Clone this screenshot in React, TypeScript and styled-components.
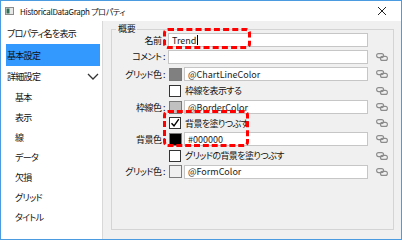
import React from "react";
import styled, { createGlobalStyle } from "styled-components";

const GlobalStyle = createGlobalStyle`
  html, body { margin: 0; padding: 0; background: #ffffff; }
  * { box-sizing: border-box; }
  body {
    font-family: "Noto Sans CJK JP", "Noto Sans", sans-serif;
    font-feature-settings: "palt";
    color: #000;
  }
`;

const Window = styled.div`
  width: 402px;
  height: 240px;
  border: 1px solid #4a9be0;
  display: flex;
  flex-direction: column;
  background: #f0f0f0;
  position: relative;
`;

const TitleBar = styled.div`
  height: 20px;
  background: #ffffff;
  display: flex;
  align-items: center;
  padding: 0 0 0 4px;
  flex: none;
`;

const TitleText = styled.span`
  font-size: 8px;
  margin-left: 6px;
  color: #111;
  letter-spacing: -0.3px;
`;

const CloseBox = styled.div`
  margin-left: auto;
  width: 30px;
  height: 20px;
  display: flex;
  align-items: center;
  justify-content: center;
  margin-right: 4px;
`;

const Body = styled.div`
  flex: 1;
  display: flex;
  min-height: 0;
`;

const Sidebar = styled.div`
  width: 102px;
  background: #ffffff;
  border-right: 1px solid #d8d8d8;
  padding: 1px 2px 0 5px;
  display: flex;
  flex-direction: column;
`;

const NavItem = styled.div<{ $h: number; $indent?: boolean; $active?: boolean }>`
  height: ${(p) => p.$h}px;
  display: flex;
  align-items: center;
  padding-left: ${(p) => (p.$indent ? 9 : 1)}px;
  font-size: 9px;
  letter-spacing: -0.7px;
  background: ${(p) => (p.$active ? "#3399ff" : "transparent")};
  color: #111;
`;

const Chevron = styled.svg`
  margin-left: auto;
  margin-right: 1px;
`;

const Main = styled.div`
  flex: 1;
  padding: 2px 7px 9px 8px;
  position: relative;
  display: flex;
`;

const Group = styled.fieldset`
  flex: 1;
  margin: 0;
  min-width: 0;
  border: 1px solid #d4d4d4;
  padding: 0 0 0 1px;
`;

const Legend = styled.legend`
  font-size: 9px;
  letter-spacing: -0.3px;
  padding: 0 2px;
  margin-left: 3px;
  line-height: 12px;
  color: #111;
`;

const FieldGrid = styled.div`
  display: grid;
  grid-template-columns: 53px 1fr 23px;
  column-gap: 2px;
  margin-top: -3px;
`;

const Label = styled.div<{ $h: number }>`
  height: ${(p) => p.$h}px;
  display: flex;
  align-items: center;
  justify-content: flex-end;
  font-size: 9px;
  letter-spacing: -0.5px;
  padding-right: 1px;
  white-space: pre;
  color: #111;
`;

const Cell = styled.div<{ $h: number }>`
  height: ${(p) => p.$h}px;
  display: flex;
  align-items: center;
  gap: 2px;
  min-width: 0;
`;

const LinkCell = styled.div<{ $h: number }>`
  height: ${(p) => p.$h}px;
  display: flex;
  align-items: center;
  justify-content: center;
  padding-left: 1px;
`;

const TextBox = styled.div`
  flex: 1;
  height: 14px;
  background: #ffffff;
  border: 1px solid #c6c6c6;
  font-family: "Noto Sans CJK JP", "Noto Sans", sans-serif;
  font-size: 9px;
  display: flex;
  align-items: center;
  padding-left: 3px;
  color: #222;
  white-space: nowrap;
  overflow: hidden;
`;

const Caret = styled.span`
  display: inline-block;
  width: 1px;
  height: 10px;
  background: #000;
  margin-left: 1px;
`;

const Swatch = styled.div<{ $color: string }>`
  width: 13px;
  height: 13px;
  flex: none;
  margin-left: 1px;
  background: ${(p) => p.$color};
  border: 1px solid #7a7a7a;
`;

const CheckRow = styled.div`
  display: flex;
  align-items: center;
  gap: 4px;
  margin-left: 1px;
  font-size: 9px;
  letter-spacing: -0.6px;
  color: #111;
`;

const CheckBox = styled.div`
  width: 12px;
  height: 12px;
  border: 1px solid #333;
  background: #fff;
  display: flex;
  align-items: center;
  justify-content: center;
  flex: none;
`;

const Highlight = styled.div<{ $x: number; $y: number; $w: number; $h: number }>`
  position: absolute;
  left: ${(p) => p.$x}px;
  top: ${(p) => p.$y}px;
  width: ${(p) => p.$w}px;
  height: ${(p) => p.$h}px;
  border: 3px dashed #ff0000;
  border-radius: 5px;
  pointer-events: none;
`;

const LinkIcon = () => (
  <svg width="12" height="8" viewBox="0 0 12 8">
    <rect x="0.6" y="0.6" width="7" height="4" rx="2" fill="none" stroke="#8c8c8c" strokeWidth="1.1" />
    <rect x="4.4" y="3.4" width="7" height="4" rx="2" fill="none" stroke="#8c8c8c" strokeWidth="1.1" />
  </svg>
);

const CheckMark = () => (
  <svg width="10" height="10" viewBox="0 0 10 10">
    <path d="M1.5 5.2 L4 7.8 L8.8 1.2" fill="none" stroke="#000" strokeWidth="1.4" />
  </svg>
);

type Row =
  | { kind: "text"; h: number; label: string; value: string; caret?: boolean; link?: boolean }
  | { kind: "color"; h: number; label: string; color: string; value: string }
  | { kind: "check"; h: number; text: string; checked?: boolean };

const rows: Row[] = [
  { kind: "text", h: 16, label: "名前 :", value: "Trend", caret: true, link: false },
  { kind: "text", h: 17, label: "コメント :", value: "", link: true },
  { kind: "color", h: 18, label: "グリッド色 :", color: "#808080", value: "@ChartLineColor" },
  { kind: "check", h: 15, text: "枠線を表示する" },
  { kind: "color", h: 18, label: "枠線色 :", color: "#c0c0c0", value: "@BorderColor" },
  { kind: "check", h: 14, text: "背景を塗りつぶす", checked: true },
  { kind: "color", h: 18, label: "背景色 :", color: "#000000", value: "#000000" },
  { kind: "check", h: 15, text: "グリッドの背景を塗りつぶす" },
  { kind: "color", h: 17, label: "グリッド色 :", color: "#f0f0f0", value: "@FormColor" },
];

const navItems = ["基本", "表示", "線", "データ", "欠損", "グリッド", "タイトル"];

export default function App() {
  return (
    <>
      <GlobalStyle />
      <Window>
        <TitleBar>
          <svg width="9" height="8" viewBox="0 0 9 8">
            <rect x="0.5" y="0.5" width="8" height="7" fill="#e8e8e8" stroke="#8a8a8a" />
            <rect x="1.5" y="1.5" width="3" height="5" fill="#2f6f5a" />
          </svg>
          <TitleText>HistoricalDataGraph プロパティ</TitleText>
          <CloseBox>
            <svg width="10" height="10" viewBox="0 0 10 10">
              <path d="M1 1 L9 9 M9 1 L1 9" stroke="#222" strokeWidth="1" />
            </svg>
          </CloseBox>
        </TitleBar>
        <Body>
          <Sidebar>
            <NavItem $h={22}>プロパティ名を表示</NavItem>
            <NavItem $h={22} $active>基本設定</NavItem>
            <NavItem $h={21}>
              詳細設定
              <Chevron width="12" height="7" viewBox="0 0 12 7">
                <path d="M1 1 L6 6 L11 1" fill="none" stroke="#333" strokeWidth="1.3" />
              </Chevron>
            </NavItem>
            {navItems.map((n) => (
              <NavItem key={n} $h={20} $indent>
                {n}
              </NavItem>
            ))}
          </Sidebar>
          <Main>
            <Group>
              <Legend>概要</Legend>
              <FieldGrid>
                {rows.map((r, i) => {
                  const h = r.h;
                  if (r.kind === "check") {
                    return (
                      <React.Fragment key={i}>
                        <Label $h={h} />
                        <Cell $h={h}>
                          <CheckRow>
                            <CheckBox>{r.checked ? <CheckMark /> : null}</CheckBox>
                            {r.text}
                          </CheckRow>
                        </Cell>
                        <LinkCell $h={h}>
                          <LinkIcon />
                        </LinkCell>
                      </React.Fragment>
                    );
                  }
                  return (
                    <React.Fragment key={i}>
                      <Label $h={h}>{r.label}</Label>
                      <Cell $h={h}>
                        {r.kind === "color" ? <Swatch $color={r.color} /> : null}
                        <TextBox>
                          {r.value}
                          {r.kind === "text" && r.caret ? <Caret /> : null}
                        </TextBox>
                      </Cell>
                      <LinkCell $h={h}>
                        {r.kind === "text" && !r.link ? null : <LinkIcon />}
                      </LinkCell>
                    </React.Fragment>
                  );
                })}
              </FieldGrid>
            </Group>
            <Highlight $x={60} $y={7} $w={88} $h={21} />
            <Highlight $x={60} $y={89} $w={86} $h={37} />
          </Main>
        </Body>
      </Window>
    </>
  );
}
